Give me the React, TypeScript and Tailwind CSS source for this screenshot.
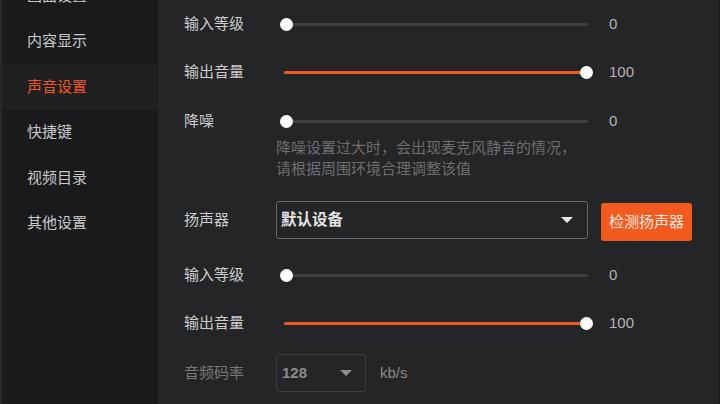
import React from "react";

const FONT = { fontFamily: '"Liberation Sans", "Noto Sans CJK SC", sans-serif' };

const menu = ["画面设置", "内容显示", "声音设置", "快捷键", "视频目录", "其他设置"];

function Caret({ className }: { className: string }) {
  return (
    <svg width="12" height="6" viewBox="0 0 12 6" className={className}>
      <path d="M0 0h12L6 6z" fill="currentColor" />
    </svg>
  );
}

function Track({ value }: { value: number }) {
  return (
    <div className="relative flex h-[14px] w-[316px] items-center pl-[8px] pr-[4px]">
      <div className="h-[3px] w-full rounded-full bg-[#3d3f42]">
        <div className="h-full rounded-full bg-[#f2591f]" style={{ width: `${value}%` }} />
      </div>
      <span
        className="absolute top-px h-[13px] w-[13px] rounded-full bg-white"
        style={{ left: `${3.5 + value * 3}px` }}
      />
    </div>
  );
}

function Slider({ label, value }: { label: string; value: number }) {
  return (
    <div className="flex h-12 items-center">
      <span className="w-[92px] text-[15px] text-[#cdcdcd]">{label}</span>
      <Track value={value} />
      <span className="ml-[17px] text-[15px] text-[#b4b4b4]">{value}</span>
    </div>
  );
}

export default function App() {
  return (
    <div className="flex h-[404px] w-[720px] overflow-hidden bg-[#232527]" style={FONT}>
      {/* Sidebar */}
      <aside className="w-[158px] shrink-0 border-l-2 border-[#27292b] bg-[#191a1c]">
        <ul className="mt-[-27px]">
          {menu.map((item) => {
            const active = item === "声音设置";
            return (
              <li
                key={item}
                className={`flex h-[45.5px] items-center pl-[25px] text-[15px] ${
                  active ? "bg-[#1f2022] text-[#f0561d]" : "text-[#c9c9c9]"
                }`}
              >
                {item}
              </li>
            );
          })}
        </ul>
      </aside>

      {/* Settings */}
      <main className="flex-1 border-r-2 border-[#1c1d1f] pl-[26px]">
        <Slider label="输入等级" value={0} />
        <Slider label="输出音量" value={100} />
        <div className="mt-3 flex h-[26px] items-center">
          <span className="w-[92px] text-[15px] text-[#cdcdcd]">降噪</span>
          <Track value={0} />
          <span className="ml-[17px] text-[15px] text-[#b4b4b4]">0</span>
        </div>
        <p className="ml-[92px] mt-[3px] text-[15px] leading-[21px] text-[#6d6e70]">
          降噪设置过大时，会出现麦克风静音的情况，
          <br />
          请根据周围环境合理调整该值
        </p>

        <div className="mt-[22px] flex items-start">
          <span className="flex h-[38px] w-[92px] items-center text-[15px] text-[#cdcdcd]">扬声器</span>
          <div className="flex h-[38px] w-[312px] items-center justify-between rounded-[3px] border border-[#696c6f] pl-[4px] pr-[14px]">
            <span className="text-[15.5px] font-bold text-[#e4e4e4]">默认设备</span>
            <Caret className="text-[#e8e8e8]" />
          </div>
          <button className="ml-[13px] mt-[2px] h-[38px] w-[91px] rounded-[3px] bg-[#f25a1e] text-[15px] text-[#fbe9e0]">
            检测扬声器
          </button>
        </div>

        <div className="mt-[10px]">
          <Slider label="输入等级" value={0} />
          <Slider label="输出音量" value={100} />
        </div>

        <div className="mt-[7px] flex items-center">
          <span className="w-[92px] text-[15px] text-[#77787a]">音频码率</span>
          <div className="flex h-[38px] w-[90px] items-center justify-between rounded-[3px] border border-[#3a3c3f] pl-[5px] pr-[13px]">
            <span className="text-[15px] font-bold text-[#8a8b8d]">128</span>
            <Caret className="text-[#8e8f91]" />
          </div>
          <span className="ml-[14px] text-[15px] text-[#8a8b8d]">kb/s</span>
        </div>
      </main>
    </div>
  );
}
